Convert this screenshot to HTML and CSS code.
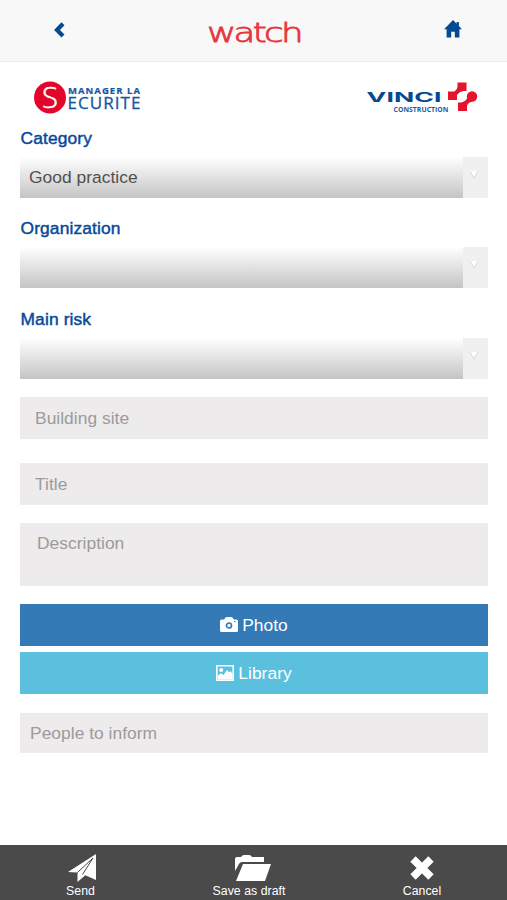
FILE: index.html
```html
<!DOCTYPE html>
<html lang="en">
<head>
<meta charset="utf-8">
<meta name="viewport" content="width=device-width, initial-scale=1">
<title>Watch</title>
<link rel="stylesheet" href="styles.css">
</head>
<body>
<div class="app">
  <header class="topbar">
    <svg class="back" viewBox="0 0 12 16" width="12" height="16"><path d="M10 1.800 4 8l6 6" fill="none" stroke="#034a93" stroke-width="4.200"/></svg>
    <svg class="watch" viewBox="0 0 100 34" width="100" height="34"><text x="3" y="26" textLength="94" lengthAdjust="spacingAndGlyphs">watch</text></svg>
    <svg class="home" viewBox="0 0 18 18" width="18" height="18"><path d="M9 0 0 9.200h2.600V17.500h4.600v-5.800h3.600v5.800h4.600V9.200H18L14.900 6V2h-2.300v1.700z" fill="#034a93"/></svg>
  </header>
  <main class="content">
    <div class="brands">
      <svg viewBox="0 0 112 36" width="112" height="36">
        <circle cx="17" cy="18.500" r="16" fill="#e2062c"/>
        <text class="s-mark" x="9" y="29" textLength="16" lengthAdjust="spacingAndGlyphs">S</text>
        <text class="manager" x="35" y="14.500" textLength="72" lengthAdjust="spacing">MANAGER LA</text>
        <text class="ecurite" x="34.500" y="29.500" textLength="73" lengthAdjust="spacing">ECURITE</text>
      </svg>
      <svg viewBox="0 0 113 34" width="113" height="34">
        <text class="vinci" x="1.500" y="23" textLength="75" lengthAdjust="spacingAndGlyphs">VINCI</text>
        <text class="construction" x="28.500" y="32.500" textLength="55" lengthAdjust="spacingAndGlyphs">CONSTRUCTION</text>
        <g fill="#e5142d"><path d="M92.500 3.500h9v8.500H98q-4 1-6 4v5H83v-8.500h6.500q3-2 3-5z"/><path d="M93 23.500h3q5-1 6.500-5l5 4q-5 1-5.500 4.500v5h-9z"/><circle cx="107" cy="17.500" r="5.200"/></g>
      </svg>
    </div>
    <section class="group">
      <div class="label">Category</div>
      <div class="select"><span class="value">Good practice</span><span class="arrow"><svg viewBox="0 0 10 9" width="10" height="9"><path d="M1 1h8L5 8z" fill="#fff"/><path d="M1 1l4 7 4-7" fill="none" stroke="#dad9d9"/></svg></span></div>
    </section>
    <section class="group">
      <div class="label">Organization</div>
      <div class="select"><span class="value"></span><span class="arrow"><svg viewBox="0 0 10 9" width="10" height="9"><path d="M1 1h8L5 8z" fill="#fff"/><path d="M1 1l4 7 4-7" fill="none" stroke="#dad9d9"/></svg></span></div>
    </section>
    <section class="group">
      <div class="label">Main risk</div>
      <div class="select"><span class="value"></span><span class="arrow"><svg viewBox="0 0 10 9" width="10" height="9"><path d="M1 1h8L5 8z" fill="#fff"/><path d="M1 1l4 7 4-7" fill="none" stroke="#dad9d9"/></svg></span></div>
    </section>
    <div class="field site">Building site</div>
    <div class="field title">Title</div>
    <div class="field description">Description</div>
    <div class="button photo">
      <svg viewBox="0 0 18 16" width="18" height="16"><path fill="#fff" d="M1.500 2.500H4L5.500.6Q6 0 7 0h4q1 0 1.500.6L14 2.500h2.500Q18 2.500 18 4v9.500q0 1.500-1.500 1.500h-15Q0 15 0 13.500V4q0-1.500 1.500-1.500z"/><circle cx="9" cy="8.500" r="2.500" fill="none" stroke="#337ab7" stroke-width="1.700"/><path d="M14 4.500h1.500" stroke="#337ab7"/></svg>
      <span>Photo</span>
    </div>
    <div class="button library">
      <svg viewBox="0 0 18 16" width="18" height="16"><path d="M.8.8h16.400v14.400H.8z" fill="none" stroke="#fff" stroke-width="1.600"/><circle cx="5.200" cy="5" r="2" fill="#fff"/><path fill="#fff" d="M2 14.500v-4l3-2.300 2.500 1.800L11 5l2 2.500L14.500 6 16.500 9v5.500z"/></svg>
      <span>Library</span>
    </div>
    <div class="field people">People to inform</div>
  </main>
  <footer class="actions">
    <div class="action send">
      <svg viewBox="0 0 28 28" width="28" height="28"><path fill="#fff" d="M28 0v26L17.300 21.300 9.500 28v-9.500L0 18z"/><path d="M25 4 9.200 18.700M25 4 14.500 20.500" fill="none" stroke="#4a4a4a" stroke-width="1"/></svg>
      <span>Send</span>
    </div>
    <div class="action save">
      <svg viewBox="0 0 36 28" width="36" height="28"><path fill="#fff" d="M0 17V5q0-2 2-2h4q1-2 3-2h5q2 0 3 2h12v5H7q-2 0-3 2zM8 10h28l-6 17H1z"/></svg>
      <span>Save as draft</span>
    </div>
    <div class="action cancel">
      <svg viewBox="0 0 24 24" width="24" height="24"><path d="M3 3l18 18M21 3 3 21" fill="none" stroke="#fff" stroke-width="7.500"/></svg>
      <span>Cancel</span>
    </div>
  </footer>
</div>
</body>
</html>
```
FILE: styles.css
```css
* { box-sizing: border-box; }
body {
  margin: 0;
  background: #fff;
  font-family: "Liberation Sans", Arial, sans-serif;
  font-size: 17.4px;
  letter-spacing: 0.03px;
}
svg { display: block; flex: none; }
.app { height: 900px; display: flex; flex-direction: column; overflow: hidden; }
.topbar {
  height: 62px;
  flex: none;
  display: flex;
  justify-content: space-between;
  align-items: flex-start;
  padding: 20px 45px 0 53px;
  background: #f8f8f8;
  border-bottom: 1px solid #ebebeb;
}
.back { margin-top: 2px; }
.watch { margin: -4px 2px 0 0; }
.watch text {
  font: 27px "DejaVu Sans", sans-serif;
  font-weight: 200;
  letter-spacing: -2px;
  fill: #e83540;
  stroke: #e83540;
  stroke-width: 0.8px;
}
.content { flex: 1; padding: 16px 19px 0 20px; }
.brands {
  height: 48px;
  display: flex;
  justify-content: space-between;
  padding: 0 10px 0 13px;
}
.brands svg { margin-top: 0.5px; }
.s-mark { font: 29px "Open Sans", sans-serif; font-weight: 300; fill: #fff; stroke: #fff; stroke-width: 0.5px; }
.manager { font: bold 9.500px "Open Sans", sans-serif; fill: #1556a0; stroke: #1556a0; stroke-width: 0.2px; }
.ecurite { font: 17px "Open Sans", sans-serif; fill: #1556a0; stroke: #1556a0; stroke-width: 0.3px; }
.vinci { font: bold 13.500px Inter, sans-serif; fill: #064990; }
.construction { font: bold 7.500px "Open Sans", sans-serif; fill: #1d5b9f; }
.group { height: 90.400px; }
.label {
  height: 31px;
  padding-left: 0.5px;
  line-height: 24px;
  color: #07499a;
  letter-spacing: 0.12px;
  -webkit-text-stroke: 0.450px #07499a;
}
.select { height: 41px; display: flex; }
.value {
  flex: 1;
  padding-left: 9px;
  line-height: 41px;
  color: #505050;
  background: linear-gradient(#fff 0%, #f3f3f3 20%, #d9d9d9 65%, #c4c4c4 100%);
}
.arrow {
  width: 25px;
  display: flex;
  justify-content: center;
  padding: 13px 3px 0 0;
  background: #f1f0f0;
}
.field {
  height: 42px;
  padding-left: 15px;
  line-height: 42px;
  color: #9b9b9b;
  background: #edebec;
}
.site { margin-bottom: 24px; }
.title { margin-bottom: 18px; }
.description { height: 63px; padding-left: 17px; line-height: 40px; margin-bottom: 18px; }
.button {
  height: 42px;
  display: flex;
  align-items: center;
  justify-content: center;
  gap: 4px;
  color: #fff;
}
.button svg { margin-top: -1px; }
.photo { background: #337ab7; margin-bottom: 6px; }
.library { background: #5bc0de; margin-bottom: 19px; }
.people { height: 40px; line-height: 41px; padding-left: 10px; }
.actions {
  height: 55px;
  flex: none;
  display: grid;
  grid-template-columns: 161px 176px 170px;
  background: #4a4a4a;
  color: #fff;
  font-size: 12.300px;
}
.action { display: flex; flex-direction: column; align-items: center; padding-top: 9px; }
.action span { line-height: 14px; margin-top: 2px; }
.send svg { margin-left: 2px; }
.save svg { margin-left: 7px; }
.cancel svg { margin: 2px 0; }
```
